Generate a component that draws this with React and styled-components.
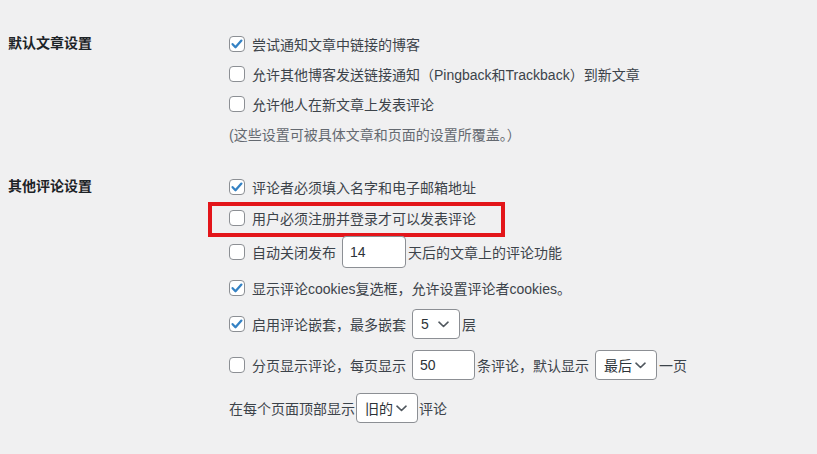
import React from 'react'
import styled, { createGlobalStyle } from 'styled-components'

const GlobalStyle = createGlobalStyle`
  body {
    margin: 0;
    background: #f0f0f1;
    color: #3c434a;
    font-family: "Liberation Sans", "Noto Sans CJK SC", sans-serif;
    font-size: 14px;
  }
`

const Form = styled.div`
  padding: 29px 0 0 8px;
`

const Section = styled.section`
  display: grid;
  grid-template-columns: 221px 1fr;
  margin-top: ${p => p.$gap || 0}px;
`

const Label = styled.div`
  font-weight: 700;
  color: #1d2327;
  line-height: 28px;
`

const Fields = styled.div`
  display: flex;
  flex-direction: column;
`

const Row = styled.div`
  display: flex;
  align-items: center;
  height: ${p => p.$h || 30}px;
  white-space: nowrap;
  position: relative;
`

const Marked = styled(Row)`
  &::after {
    content: '';
    position: absolute;
    left: -21px;
    top: 0;
    width: 289px;
    height: 27px;
    border: 4px solid #e3151a;
  }
`

const Box = styled.span`
  display: inline-flex;
  align-items: center;
  justify-content: center;
  width: 14px;
  height: 14px;
  border: 1px solid #8c8f94;
  border-radius: 4px;
  background: #fff;
  margin-right: 7px;
  flex-shrink: 0;
`

const Note = styled.span`
  color: #646970;
`

const TextInput = styled.span`
  display: inline-flex;
  align-items: center;
  box-sizing: border-box;
  width: ${p => p.$w || 64}px;
  height: ${p => p.$h || 32}px;
  padding-left: 7px;
  margin: 0 2px 0 6px;
  border: 1px solid #8c8f94;
  border-radius: 4px;
  background: #fff;
  color: #2c3338;
`

const Select = styled.span`
  display: inline-flex;
  align-items: center;
  justify-content: space-between;
  box-sizing: border-box;
  width: ${p => p.$w}px;
  height: 30px;
  padding: 0 10px 0 8px;
  margin: ${p => p.$tight ? '0 1px' : '0 2px 0 6px'};
  border: 1px solid #8c8f94;
  border-radius: 4px;
  background: #fff;
  color: #2c3338;
`

const Check = ({ on }) => (
  <Box>
    {on && (
      <svg width="14" height="14" viewBox="0 0 14 14">
        <path d="M2.6 7.2l2.9 3 5.9-6.6" fill="none" stroke="#3582c4" strokeWidth="2.3" strokeLinecap="round" strokeLinejoin="round" />
      </svg>
    )}
  </Box>
)

const Chevron = () => (
  <svg width="11" height="7" viewBox="0 0 11 7">
    <path d="M1 1.2l4.5 4.3 4.5-4.3" fill="none" stroke="#50575e" strokeWidth="1.6" strokeLinecap="round" strokeLinejoin="round" />
  </svg>
)

export default function App () {
  return (
    <>
      <GlobalStyle />
      <Form>
        <Section>
          <Label>默认文章设置</Label>
          <Fields>
            <Row><Check on />尝试通知文章中链接的博客</Row>
            <Row><Check />允许其他博客发送链接通知（Pingback和Trackback）到新文章</Row>
            <Row><Check />允许他人在新文章上发表评论</Row>
            <Row><Note>(这些设置可被具体文章和页面的设置所覆盖。）</Note></Row>
          </Fields>
        </Section>
        <Section $gap={23}>
          <Label>其他评论设置</Label>
          <Fields>
            <Row><Check on />评论者必须填入名字和电子邮箱地址</Row>
            <Marked $h={31}><Check />用户必须注册并登录才可以发表评论</Marked>
            <Row $h={37}>
              <Check />自动关闭发布<TextInput>14</TextInput>天后的文章上的评论功能
            </Row>
            <Row $h={36}><Check on />显示评论cookies复选框，允许设置评论者cookies。</Row>
            <Row $h={36}>
              <Check on />启用评论嵌套，最多嵌套<Select $w={48}>5<Chevron /></Select>层
            </Row>
            <Row $h={46}>
              <Check />分页显示评论，每页显示<TextInput $w={63} $h={30}>50</TextInput>条评论，默认显示<Select $w={62}>最后<Chevron /></Select>一页
            </Row>
            <Row $h={40}>
              在每个页面顶部显示<Select $w={62} $tight>旧的<Chevron /></Select>评论
            </Row>
          </Fields>
        </Section>
      </Form>
    </>
  )
}
